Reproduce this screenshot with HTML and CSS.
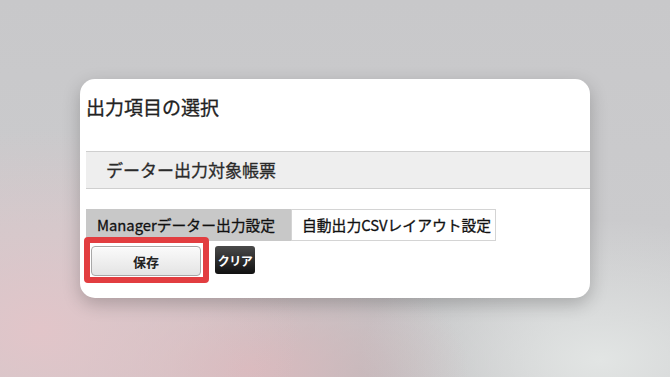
FILE: index.html
```html
<!DOCTYPE html>
<html lang="ja">
<head>
  <meta charset="UTF-8">
  <title>出力項目の選択</title>
  <link rel="stylesheet" href="styles.css">
</head>
<body>
  <div class="card">
    <h1 class="title">出力項目の選択</h1>

    <div class="section-head">データー出力対象帳票</div>

    <div class="tabs">
      <div class="tab active">Managerデーター出力設定</div>
      <div class="tab">自動出力CSVレイアウト設定</div>
    </div>

    <div class="actions">
      <button class="btn-save marked">保存</button>
      <button class="btn-clear">クリア</button>
    </div>
  </div>
</body>
</html>
```

FILE: styles.css
```css
html, body {
  margin: 0;
  height: 100%;
}

body {
  font-family: "Noto Sans CJK JP", "Noto Sans", sans-serif;
  color: #222;
  display: flex;
  align-items: center;
  justify-content: center;
  background:
    radial-gradient(ellipse 260px 200px at 40px 330px, #e2c5c9 0%, rgba(226,197,201,0) 100%),
    radial-gradient(ellipse 220px 120px at 250px 370px, #d9b9bd 0%, rgba(217,185,189,0) 100%),
    radial-gradient(ellipse 240px 140px at 600px 360px, #e2e5e4 0%, rgba(226,229,228,0) 100%),
    radial-gradient(ellipse 200px 120px at 370px 380px, #b9b9bb 0%, rgba(185,185,187,0) 100%),
    linear-gradient(to bottom, #c8c8ca, #cbcbcd 60%, #c9c9cb);
}

.card {
  width: 510px;
  height: 219px;
  box-sizing: border-box;
  padding-left: 6px;
  background: #fff;
  border-radius: 15px;
  box-shadow: 0 6px 18px rgba(0,0,0,0.22);
  overflow: hidden;
}

/* no medium weight installed, so thicken regular a little */
.title,
.section-head,
.tab {
  font-weight: normal;
  -webkit-text-stroke: 0.3px currentColor;
}

.title {
  margin: 0;
  padding: 14px 0 0 0;
  font-size: 19px;
  line-height: 28px;
  color: #222;
}

.section-head {
  margin-top: 30px;
  height: 36px;
  line-height: 36px;
  padding-left: 20px;
  background: #eeeeee;
  border-top: 1px solid #cfcfcf;
  border-bottom: 1px solid #cfcfcf;
  font-size: 17px;
  color: #2a2a2a;
}

.tabs {
  display: flex;
  margin-top: 20px;
}

.tab {
  width: 205px;
  height: 32px;
  box-sizing: border-box;
  padding-left: 10px;
  line-height: 30px;
  font-size: 14.8px;
  white-space: nowrap;
  color: #111;
  border: 1px solid #d4d4d4;
  background: #fff;
}

.tab.active {
  background: #c8c8c8;
  border-color: #c8c8c8;
}

.actions {
  display: flex;
  align-items: flex-start;
  margin-top: 5px;
  padding-left: 5px;
}

.btn-save {
  position: relative;
  width: 110px;
  height: 30px;
  font-family: inherit;
  font-size: 13px;
  font-weight: bold;
  color: #222;
  border: 1px solid #a8a8a8;
  border-radius: 4px;
  background: linear-gradient(to bottom, #fafafa, #e4e4e4);
  box-shadow: inset 0 1px 0 #fff;
}

.marked::after {
  content: "";
  position: absolute;
  top: -10px;
  left: -8px;
  right: -9px;
  bottom: -8px;
  border: 6px solid #e23d40;
  border-radius: 4px;
}

.btn-clear {
  margin-left: 14px;
  width: 40px;
  height: 28px;
  padding: 0;
  font-family: inherit;
  font-size: 12px;
  font-weight: bold;
  letter-spacing: -0.5px;
  color: #fff;
  border: none;
  border-radius: 3px;
  background: linear-gradient(to bottom, #4a4a4a, #111);
}
```
